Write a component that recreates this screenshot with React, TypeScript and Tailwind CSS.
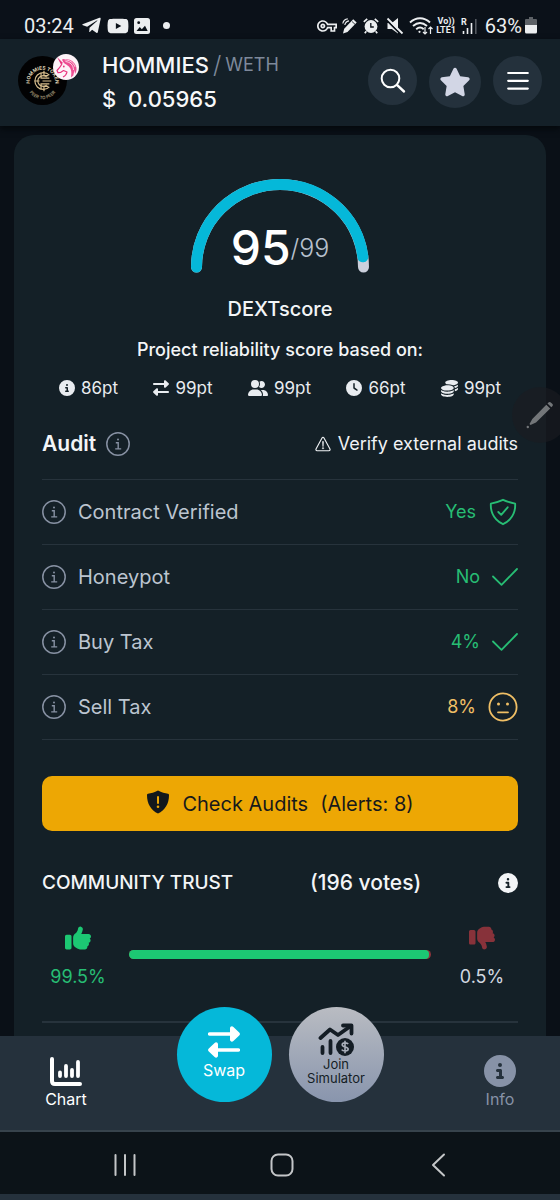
import type { ReactNode } from "react";
import { FaTelegramPlane, FaYoutube } from "react-icons/fa";
import { FaCircleInfo, FaClock, FaCoins, FaStar, FaThumbsDown, FaThumbsUp, FaUserGroup } from "react-icons/fa6";
import { IoShieldCheckmarkOutline, IoWarningOutline } from "react-icons/io5";
import { MdOutlineVpnKey } from "react-icons/md";

function SwapArrows({ className }: { className: string }) {
  return (
    <svg viewBox="0 0 32 32" className={className} fill="currentColor" aria-hidden="true">
      <path d="M1.700 6.200H22V2.500C22 .5 24 -.3 25.400 1L31.200 6.600c1 1 1 1.800 0 2.800L25.400 15c-1.400 1.300-3.400.5-3.400-1.500V9.800H1.700a1.800 1.800 0 0 1 0-3.600Z" />
      <path d="M30.300 22.200H10v-3.700c0-2-2-2.800-3.400-1.500L.8 22.600c-1 1-1 1.800 0 2.800L6.600 31c1.400 1.300 3.400.5 3.400-1.500v-3.700h20.300a1.800 1.800 0 0 0 0-3.600Z" />
    </svg>
  );
}

function InfoOutline() {
  return (
    <svg viewBox="0 0 24 24" className="size-6 shrink-0 text-[#8791a3]" fill="none" stroke="currentColor" strokeWidth="1.500" aria-hidden="true">
      <circle cx="12" cy="12" r="11.200" />
      <path d="M9.800 10.700h2.400v6M9.200 16.900h6" strokeWidth="1.400" />
      <circle cx="12" cy="7.500" r="1" fill="currentColor" stroke="none" />
    </svg>
  );
}

function Tick() {
  return (
    <svg viewBox="0 0 26 18" className="h-[18px] w-[26px]" fill="none" stroke="currentColor" strokeWidth="1.800" strokeLinecap="round" strokeLinejoin="round" aria-hidden="true">
      <path d="M1 8.500 9.500 16.800 25 1" />
    </svg>
  );
}

function NeutralFace() {
  return (
    <svg viewBox="0 0 30 30" className="size-[30px]" fill="none" stroke="currentColor" strokeWidth="1.800" aria-hidden="true">
      <circle cx="15" cy="15" r="13.600" />
      <path d="M10 20.300h10" strokeLinecap="round" />
      <circle cx="10.500" cy="12" r="1.500" fill="currentColor" stroke="none" />
      <circle cx="19.500" cy="12" r="1.500" fill="currentColor" stroke="none" />
    </svg>
  );
}

function StatusBar() {
  return (
    <div className="flex h-[39px] shrink-0 items-center justify-between bg-[#0b1119] pt-3 pr-[23px] pl-6 font-['Roboto',sans-serif] text-xl text-[#eceef0]">
      <div className="flex items-center gap-[5px]">
        <span>03:24</span>
        <FaTelegramPlane className="ml-0.5 size-[21px]" />
        <FaYoutube className="size-[22px]" />
        <svg viewBox="0 0 16 16" className="size-4" aria-hidden="true">
          <rect width="16" height="16" rx="2.500" fill="currentColor" />
          <path d="m2.500 13 3.300-4 2 2.200L11 7.800l2.700 5.200Z" fill="#0b1119" />
          <circle cx="4.700" cy="4.700" r="1.400" fill="#0b1119" />
        </svg>
        <span className="ml-2 size-[7px] rounded-full bg-current" />
      </div>
      <div className="flex items-center gap-[5px]">
        <MdOutlineVpnKey className="size-5" />
        <svg viewBox="0 0 16 16" className="size-4" aria-hidden="true">
          <path d="m1 15.500 1.200-4.700 9-9.500 3.500 3.200-9.200 9.600Z" fill="currentColor" />
          <path d="m10 3.500 3 2.800" stroke="#0b1119" strokeWidth=".8" />
          <path d="M.8 5.500C1.300 2.800 3 1 5.800.8M2.800 7C3.200 4.800 4.600 3.200 7 2.800" fill="none" stroke="currentColor" strokeWidth="1.200" />
        </svg>
        <svg viewBox="0 0 16 16" className="size-4" aria-hidden="true">
          <circle cx="8" cy="8.500" r="6.400" fill="currentColor" />
          <path d="m.8 3.800 3.400-3M15.200 3.800l-3.400-3M3.300 13.300l-1.500 2M12.700 13.300l1.500 2" stroke="currentColor" strokeWidth="1.700" />
          <path d="M7.800 5v4h3" fill="none" stroke="#0b1119" strokeWidth="1.300" />
        </svg>
        <svg viewBox="0 0 18 18" className="ml-0.5 size-[18px]" aria-hidden="true">
          <path d="M1.500 6h4.300L12 1v15.500L5.800 12H1.500Z" fill="currentColor" />
          <path d="M.5 3 15.500 18" stroke="#0b1119" strokeWidth="1.800" />
          <path d="M1.500 1.500 16.500 16.500" stroke="currentColor" strokeWidth="1.800" />
        </svg>
        <svg viewBox="0 0 24 18" className="h-[18px] w-6" fill="none" stroke="currentColor" strokeWidth="1.900" aria-hidden="true">
          <path d="M1 5.500C7-.2 15-.2 21 5.500M4 9c4.500-4 9.500-4 14 0M7.200 12.300c2.500-2.200 5.200-2.200 7.500 0" />
          <circle cx="10.500" cy="14.800" r="1.100" fill="currentColor" stroke="none" />
          <path d="M16 10v7m-2-2 2 2 2-2M21.500 17v-7m-2 2 2-2 2 2" strokeWidth="1.200" />
        </svg>
        <span className="-ml-0.5 flex flex-col items-center text-[9px] leading-[9px] font-bold">
          <span>Vo))</span>
          <span>LTE1</span>
        </span>
        <svg viewBox="0 0 17 18" className="h-[18px] w-[17px]" aria-hidden="true">
          <path d="M2.500 17v-3M6.500 17v-6M10.500 17V6" stroke="currentColor" strokeWidth="1.600" />
          <path d="M14.800 17V2" stroke="#545960" strokeWidth="1.600" />
          <text x="0" y="8" fontSize="9" fontWeight="700" fill="currentColor">R</text>
        </svg>
        <span className="ml-0.5">63%</span>
        <svg viewBox="0 0 12 17" className="-ml-0.5 h-[17px] w-3" aria-hidden="true">
          <path d="M4 0h4v2h3q1 0 1 1v6H0V3q0-1 1-1h3Z" fill="#5d6166" />
          <path d="M0 8h12v7q0 1.500-1.500 1.500h-9Q0 16.500 0 15Z" fill="currentColor" />
        </svg>
      </div>
    </div>
  );
}

function TokenLogo() {
  return (
    <div className="relative size-[49px] shrink-0">
      <svg viewBox="0 0 50 50" className="size-full" aria-hidden="true">
        <circle cx="25" cy="25" r="25" fill="#020203" />
        <path id="arc-top" d="M12 27A13 13 0 0 1 38 27" fill="none" />
        <path id="arc-bottom" d="M9 28A16 16 0 0 0 41 28" fill="none" />
        <text fontSize="5" fontWeight="700" fill="#ddd0b4" fontFamily="Inter, sans-serif" textAnchor="middle">
          <textPath href="#arc-top" startOffset="50%">HOMMIES TOKEN</textPath>
        </text>
        <text fontSize="4.500" fontWeight="600" fill="#9d8f70" fontFamily="Inter, sans-serif" textAnchor="middle">
          <textPath href="#arc-bottom" startOffset="50%">PEER TO PEER</textPath>
        </text>
        <g fill="none" stroke="#d7bd8d" strokeWidth="1.200">
          <path d="M32 19.500A8.600 8.600 0 1 0 32 31.500M29.500 21.500a5.500 5.500 0 1 0 0 8" />
          <path d="M23.500 17v5.500H32M23.500 34v-5.500H32M25 25.500h9M26.500 15v5H31M26.500 36v-5H31M17 25.500h5" />
        </g>
      </svg>
      <svg viewBox="0 0 26 26" className="absolute -top-0.5 -right-3 size-[26px]" aria-hidden="true">
        <circle cx="13" cy="13" r="13" fill="#fdf3f8" />
        <path d="M4 3 10 9 8 10.500Z" fill="#e8357f" />
        <path d="M9 5.500c5-1.500 11 .5 13.500 5.500 1.500 3 1.500 6-.5 9l-.5-4-1.200 5.500-2.300 2 .3-4c.3-5-2.300-7.500-6-9.500-1.500-.8-2.500-2.200-3.300-4.500Z" fill="#ed4f93" />
        <path d="M12.500 7.500c4.500.5 8 3.500 8 8.500M11.500 5.800c5 0 9 2.700 10.500 7" fill="none" stroke="#fdf3f8" strokeWidth=".8" />
        <path d="M9 10c-1.500 2.500-3 4.500-5 6.500l1 2.200 2.500-.2 3-2 3.500 1.500c-.5 2.500-2 4-4 5" fill="none" stroke="#e8357f" strokeWidth="1.200" strokeLinejoin="round" />
        <circle cx="10.800" cy="12.500" r=".9" fill="#e8357f" />
      </svg>
    </div>
  );
}

function Header() {
  const round = "flex shrink-0 items-center justify-center rounded-full bg-[#24313c]";
  return (
    <header className="z-10 flex h-[87px] shrink-0 items-start justify-between bg-[#142028] pt-[17px] pr-[18px] pl-[18px] shadow-[0_3px_6px_#04080c]">
      <div className="flex">
        <TokenLogo />
        <div className="ml-[35px] -mt-2 text-[#f7f8fa]">
          <h1 className="flex items-center gap-1 text-[22px] leading-[34px] font-medium">
            HOMMIES
            <span className="text-2xl leading-[34px] font-light text-[#7e899b]">/</span>
            <span className="text-lg leading-[34px] font-normal text-[#7e899b]">WETH</span>
          </h1>
          <p className="text-[22px] leading-[34px] font-medium whitespace-pre">$  0.05965</p>
        </div>
      </div>
      <div className="flex gap-3 text-white">
        <button type="button" aria-label="Search" className={`${round} size-[49px]`}>
          <svg viewBox="0 0 26 26" className="size-[26px]" fill="none" stroke="currentColor" strokeWidth="2" strokeLinecap="round" aria-hidden="true">
            <circle cx="10.500" cy="10.500" r="8.800" />
            <path d="m17.200 17.200 6.800 6.300" strokeWidth="2.400" />
          </svg>
        </button>
        <button type="button" aria-label="Favourite" className={`${round} size-[52px]`}>
          <FaStar className="size-8 text-[#d2d6e5]" />
        </button>
        <button type="button" aria-label="Menu" className={`${round} size-[49px]`}>
          <svg viewBox="0 0 22 20" className="h-5 w-[22px]" stroke="currentColor" strokeWidth="2.200" strokeLinecap="round" aria-hidden="true">
            <path d="M1.200 2h19.600M1.200 9.800h19.600M1.200 17.600h19.600" />
          </svg>
        </button>
      </div>
    </header>
  );
}

function Point({ icon, value }: { icon: ReactNode; value: string }) {
  return (
    <li className="flex items-center gap-1.5">
      {icon}
      {value}
    </li>
  );
}

function AuditRow({ label, value, tone, icon }: { label: string; value: string; tone: string; icon: ReactNode }) {
  return (
    <li className="flex h-[65px] items-center justify-between border-t border-[#27333c] text-xl">
      <span className="flex items-center gap-3 text-[#bcc5d0]">
        <InfoOutline />
        {label}
      </span>
      <span className={`flex items-center gap-3 text-lg ${tone}`}>
        {value}
        {icon}
      </span>
    </li>
  );
}

function ScoreCard() {
  return (
    <section className="rounded-t-[20px] bg-[#142027] px-7 pt-11 pb-12">
      <div className="grid justify-items-center">
        <svg viewBox="0 0 178 95" className="col-start-1 row-start-1 h-[95px] w-[178px]" fill="none" strokeWidth="11" strokeLinecap="round" aria-hidden="true">
          <path d="M5.500 88a83.500 82.500 0 0 1 167 0" stroke="#ccd0dc" />
          <path d="M5.500 88a83.500 82.500 0 0 1 167 0" stroke="#05b8d9" strokeDasharray="250 300" />
        </svg>
        <p className="col-start-1 row-start-1 flex items-center self-end text-[48px] leading-[52px] font-medium text-white">
          95<span className="text-[25px] font-light text-[#b8c0ce]">/99</span>
        </p>
      </div>
      <h2 className="mt-[19px] text-center text-xl leading-8 font-medium text-[#f3f5f7]">DEXTscore</h2>
      <p className="mt-[13px] text-center text-lg leading-6 font-medium text-[#f3f5f7]">Project reliability score based on:</p>
      <ul className="mt-3.5 flex justify-between px-[17px] text-[17px] leading-6 text-[#e9ecf0]">
        <Point icon={<FaCircleInfo className="size-4" />} value="86pt" />
        <Point icon={<SwapArrows className="size-4" />} value="99pt" />
        <Point icon={<FaUserGroup className="size-5" />} value="99pt" />
        <Point icon={<FaClock className="size-4" />} value="66pt" />
        <Point icon={<FaCoins className="size-[17px]" />} value="99pt" />
      </ul>

      <div className="mt-7 flex h-8 items-center justify-between">
        <h2 className="flex items-center gap-2.5 text-[21px] font-semibold text-[#f3f5f7]">
          Audit
          <InfoOutline />
        </h2>
        <a href="#external-audits" className="flex items-center gap-1.5 text-lg text-[#f0f2f5]">
          <IoWarningOutline className="size-[18px]" stroke="currentColor" strokeWidth="14" />
          Verify external audits
        </a>
      </div>
      <ul className="mt-[19px] border-b border-[#27333c]">
        <AuditRow label="Contract Verified" value="Yes" tone="text-[#27bd74]" icon={<IoShieldCheckmarkOutline className="size-[30px]" />} />
        <AuditRow label="Honeypot" value="No" tone="text-[#27bd74]" icon={<Tick />} />
        <AuditRow label="Buy Tax" value="4%" tone="text-[#27bd74]" icon={<Tick />} />
        <AuditRow label="Sell Tax" value="8%" tone="text-[#f0bf65]" icon={<NeutralFace />} />
      </ul>

      <button type="button" className="mt-9 flex h-[55px] w-full items-center justify-center gap-3 rounded-[10px] bg-[#eda704] text-xl text-[#17191b]">
        <svg viewBox="0 0 24 24" className="mb-1 size-6" aria-hidden="true">
          <path d="M12 .5c3.500 2 7 2.800 10 3.200.8.100 1 .7 1 1.500 0 8.500-4 15-11 18.300C5 20.200 1 13.700 1 5.200c0-.8.2-1.400 1-1.500 3-.4 6.500-1.200 10-3.200Z" fill="#12181c" />
          <path d="M12 7v6" stroke="#eda704" strokeWidth="2" strokeLinecap="round" />
          <circle cx="12" cy="16.800" r="1.300" fill="#eda704" />
        </svg>
        <span>Check Audits</span>
        <span>(Alerts: 8)</span>
      </button>

      <div className="mt-9 flex h-8 items-center justify-between font-medium text-[#f3f5f7]">
        <h2 className="text-[19px]">COMMUNITY TRUST</h2>
        <span className="text-[21px]">(196 votes)</span>
        <button type="button" aria-label="About community trust">
          <FaCircleInfo className="size-5" />
        </button>
      </div>
      <div className="mt-[26px] flex items-center gap-[15px] text-lg leading-7">
        <div className="flex w-[72px] flex-col items-center gap-3 text-[#27bd74]">
          <button type="button" aria-label="Vote up">
            <FaThumbsUp className="size-[26px] text-[#1cc873]" />
          </button>
          99.5%
        </div>
        <div className="mb-2 flex h-[9px] flex-1 overflow-hidden rounded-full bg-[#8e343b]">
          <div className="w-[99.5%] rounded-r-sm bg-[#1cc873]" />
        </div>
        <div className="flex w-[72px] flex-col items-center gap-3 text-[#d2d8e0]">
          <button type="button" aria-label="Vote down">
            <FaThumbsDown className="size-[26px] text-[#87323a]" />
          </button>
          0.5%
        </div>
      </div>
      <hr className="mt-[30px] border-t-2 border-[#27333c]" />
    </section>
  );
}

function BottomNav() {
  const circle = "-mt-[29px] flex size-[95px] flex-col items-center rounded-full";
  return (
    <nav className="relative z-10 grid h-24 shrink-0 grid-cols-[1fr_auto_1fr] items-start border-b-2 border-[#37434c] bg-[#25313c] px-[30px] text-base">
      <a href="#chart" className="ml-1.5 flex w-[60px] flex-col items-center pt-[21px] text-white">
        <svg viewBox="0 0 32 29" className="h-[29px] w-8" fill="none" stroke="currentColor" strokeLinecap="round" aria-hidden="true">
          <path d="M2 2v22q0 3 3 3h25" strokeWidth="4" />
          <path d="M10 15.500V19M16 9v10M22 13v6M28 5v14" strokeWidth="3.800" />
        </svg>
        <span className="mt-px">Chart</span>
      </a>
      <div className="flex gap-[17px]">
        <button type="button" className={`${circle} bg-[#05b8d9] pt-[19px] text-white`}>
          <SwapArrows className="size-8" />
          Swap
        </button>
        <button type="button" className={`${circle} bg-linear-to-b from-[#b9bcc2] to-[#8995ad] pt-4 text-[13px] leading-[14px] text-[#141d25]`}>
          <svg viewBox="0 0 36 34" className="h-[34px] w-9" aria-hidden="true">
            <g fill="none" stroke="currentColor" strokeLinecap="round" strokeLinejoin="round" strokeWidth="3.800">
              <path d="m2.500 15 9.500-8.500 8 5.500L32 3.500" />
              <path d="M25 2.500h8.500v8M4.500 24v6M12.500 18v12" />
            </g>
            <circle cx="27" cy="24" r="9" fill="currentColor" />
            <path d="M30.200 21c-1-1.500-6-1.800-6 .8 0 2.800 6 1.400 6 4.300 0 2.700-5.400 2.300-6.500.5M27 17.800v12.400" fill="none" stroke="#a9afba" strokeWidth="1.600" />
          </svg>
          <span>Join</span>
          <span>Simulator</span>
        </button>
      </div>
      <a href="#info" className="flex w-[60px] flex-col items-center justify-self-end pt-[19px] text-[#8792a7]">
        <FaCircleInfo className="size-8" />
        <span>Info</span>
      </a>
    </nav>
  );
}

function SystemNav() {
  return (
    <div className="grid h-[68px] shrink-0 grid-cols-3 place-items-center border-b-[6px] border-[#25313c] bg-[#0c1318] pt-1 pr-[42px] pl-[46px] text-[#c4c6c8]">
      <button type="button" aria-label="Recent apps">
        <svg viewBox="0 0 24 24" className="size-6" stroke="currentColor" strokeWidth="2" strokeLinecap="round" aria-hidden="true">
          <path d="M2.500 2v20M12 2v20M21.500 2v20" />
        </svg>
      </button>
      <button type="button" aria-label="Home">
        <svg viewBox="0 0 24 24" className="size-6" fill="none" stroke="currentColor" strokeWidth="2" aria-hidden="true">
          <rect x="1.500" y="1.500" width="21" height="21" rx="6.500" />
        </svg>
      </button>
      <button type="button" aria-label="Back">
        <svg viewBox="0 0 24 24" className="size-6" fill="none" stroke="currentColor" strokeWidth="2" strokeLinecap="round" strokeLinejoin="round" aria-hidden="true">
          <path d="M17 1.500 6 12l11 10.500" />
        </svg>
      </button>
    </div>
  );
}

export default function App() {
  return (
    <div className="relative flex h-screen flex-col overflow-hidden bg-[#0a1017] font-['Inter',sans-serif]">
      <StatusBar />
      <Header />
      <main className="min-h-0 flex-1 overflow-hidden px-3.5 pt-[9px]">
        <ScoreCard />
      </main>
      <BottomNav />
      <SystemNav />
      <button type="button" aria-label="Pen tools" className="absolute top-[387px] -right-2 z-10 flex size-14 items-center justify-center rounded-full bg-[#1b1c21]/60 text-[#737679]">
        <svg viewBox="0 0 28 28" className="size-7" fill="currentColor" aria-hidden="true">
          <path d="m21.500 2.500 1.300-1.200q1-.8 2 .1l1.700 1.700q.9 1 0 2l-1.200 1.200ZM20.300 3.700l3.900 3.900L10 21.500 4.500 24l-1-.9L6.300 18Z" />
          <circle cx="1.800" cy="26" r="1.200" />
        </svg>
      </button>
    </div>
  );
}
